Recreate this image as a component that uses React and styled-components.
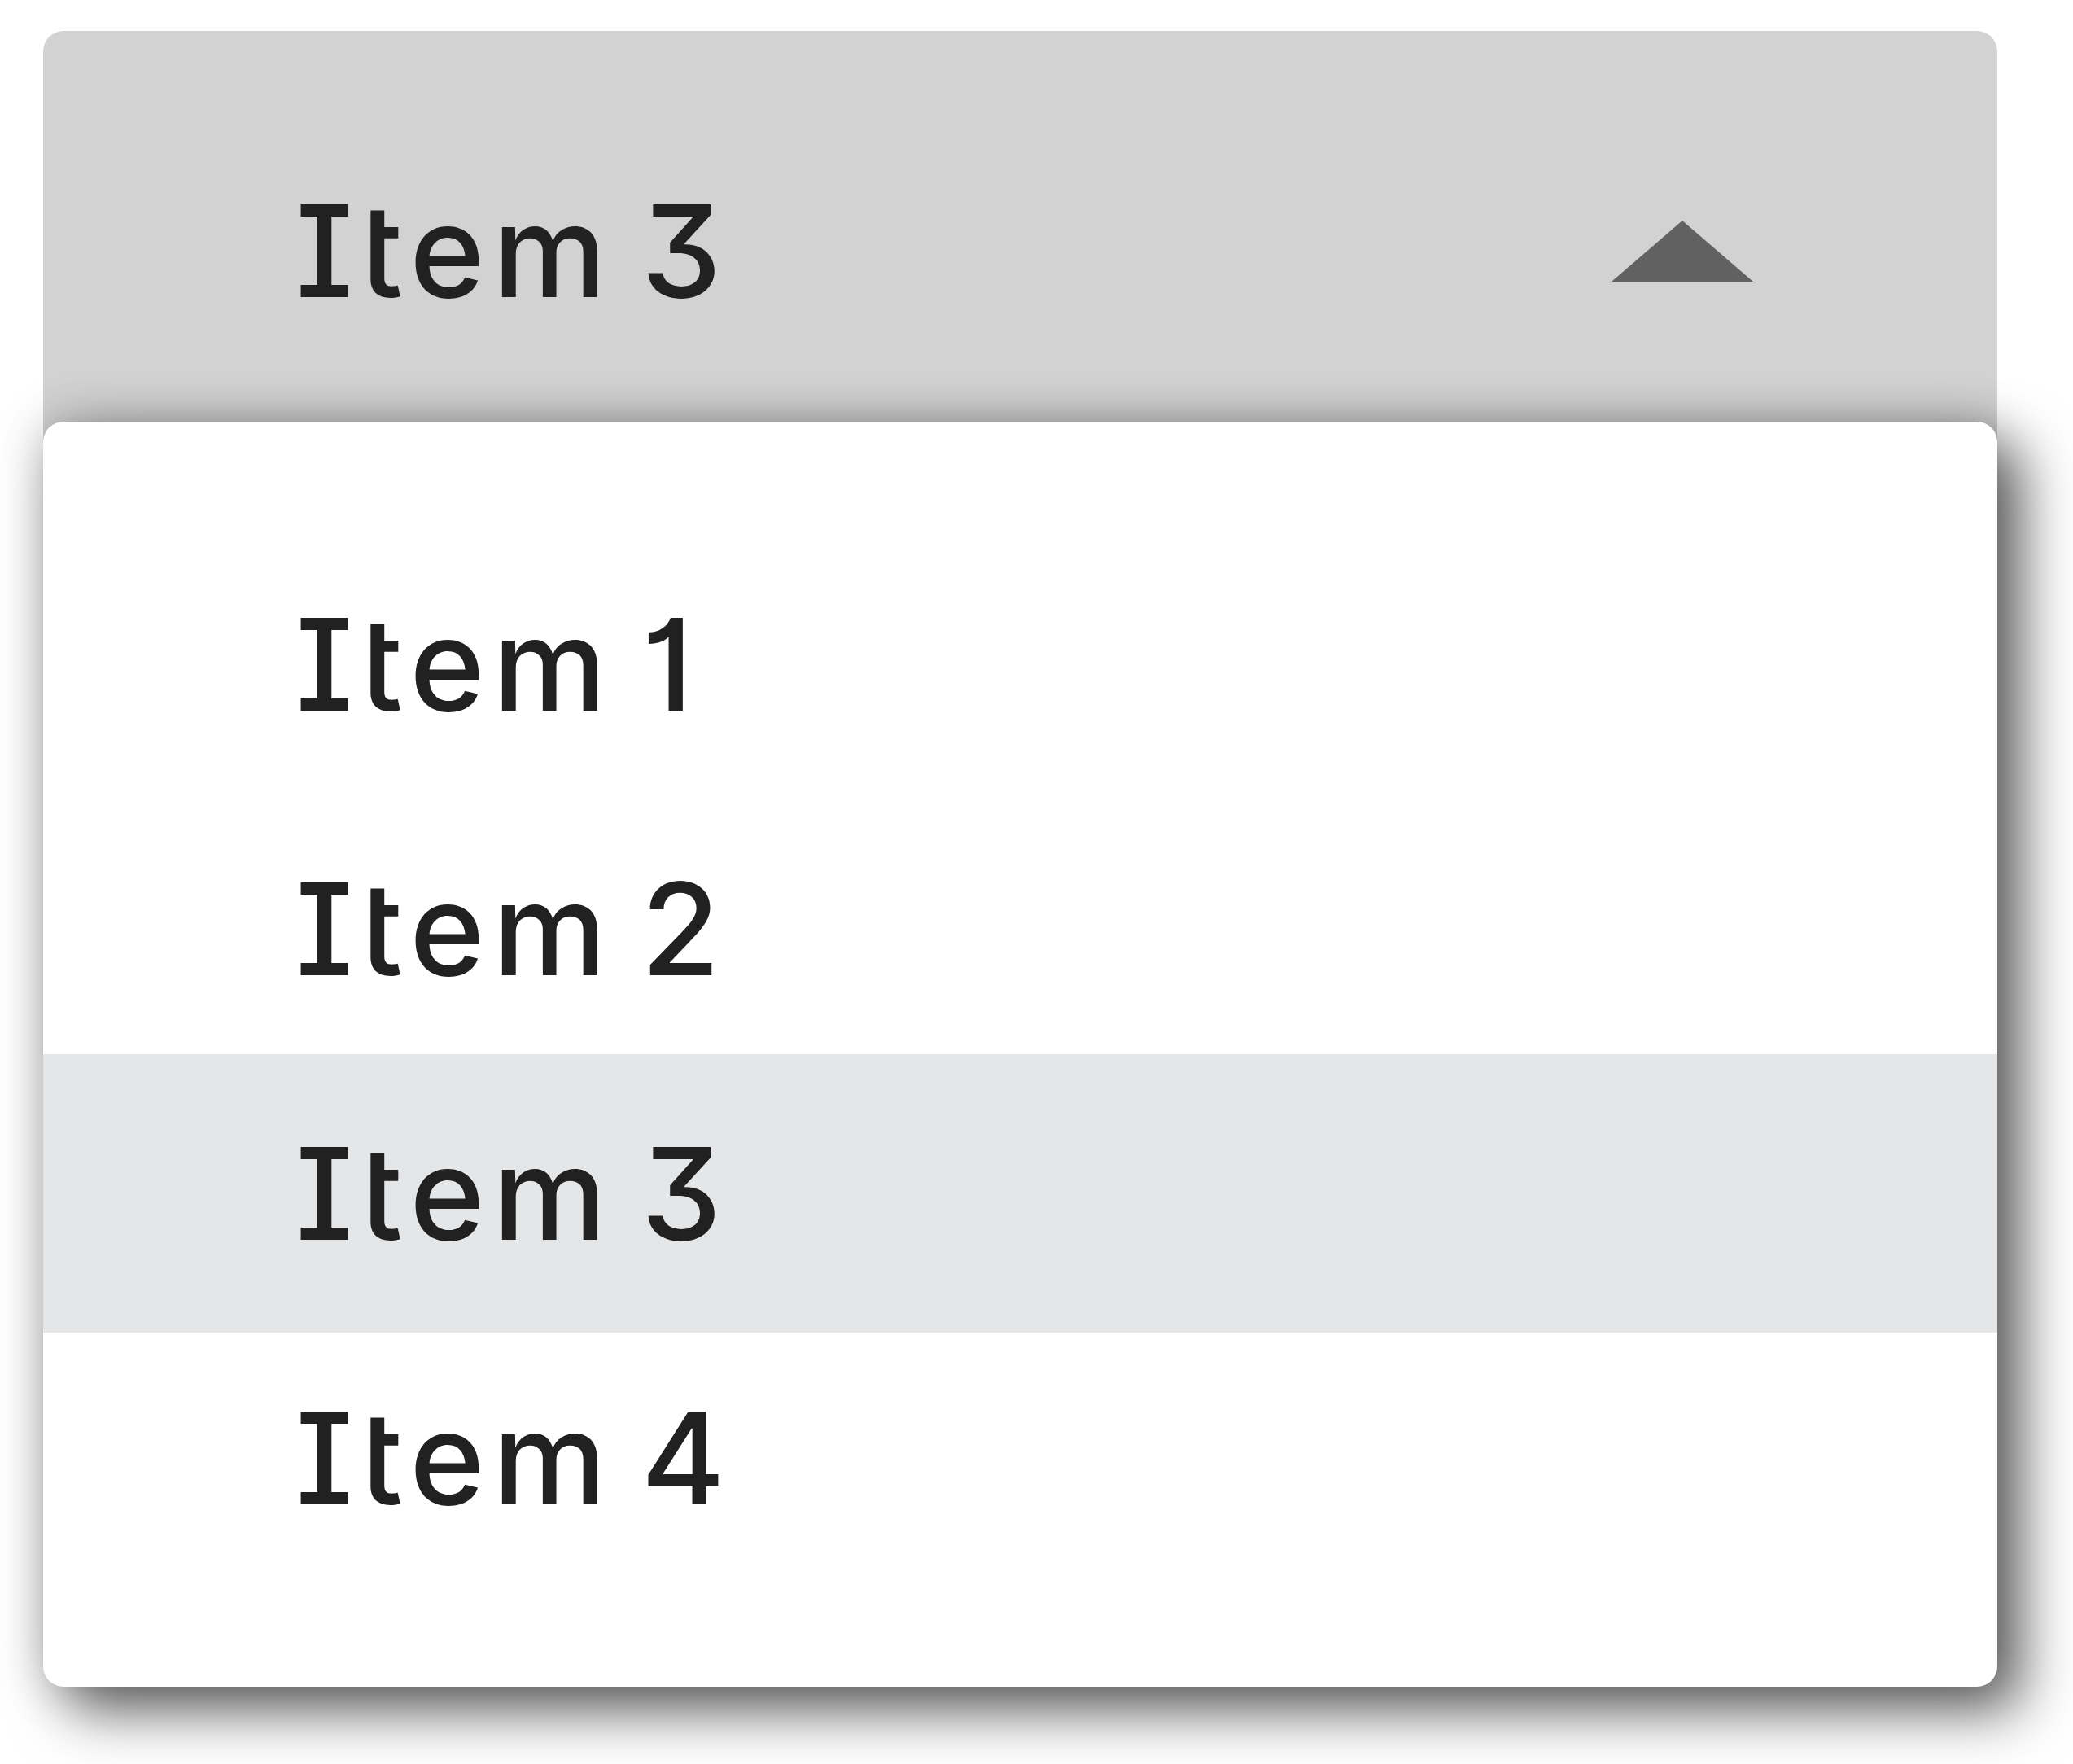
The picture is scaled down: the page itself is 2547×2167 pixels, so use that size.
import React from "react";
import styled, { createGlobalStyle } from "styled-components";

const GlobalStyle = createGlobalStyle`
  html, body {
    margin: 0;
    padding: 0;
    background: #ffffff;
  }
  body {
    font-family: "Inter", "Liberation Sans", sans-serif;
  }
`;

const Page = styled.div`
  padding: 38px 0 0 53px;
  min-height: 2167px;
  box-sizing: border-box;
`;

const SelectRoot = styled.div`
  position: relative;
  width: 2401px;
`;

const Label = styled.span`
  font-family: "Inter", "Liberation Sans", sans-serif;
  font-feature-settings: "ss02" 1, "cv08" 1, "cv09" 1, "cv13" 1, "cv01" 1;
  font-size: 157px;
  font-weight: 500;
  letter-spacing: 10px;
  word-spacing: -19px;
  line-height: 1;
  color: #212121;
  white-space: nowrap;
`;

const Trigger = styled.div`
  height: 540px;
  box-sizing: border-box;
  background: #d2d2d2;
  border-radius: 25px 25px 0 0;
  display: flex;
  align-items: center;
  justify-content: space-between;
  padding: 0 300px 0 310px;
`;

const Caret = styled.svg`
  width: 174px;
  height: 75px;
  display: block;
  flex: none;
`;

const Menu = styled.ul`
  position: absolute;
  top: 480px;
  left: 0;
  right: 0;
  margin: 0;
  padding: 136px 0 118px;
  list-style: none;
  background: #ffffff;
  border-radius: 25px;
  box-shadow: 30px 30px 70px rgba(0, 0, 0, 0.6), 0 0 60px rgba(0, 0, 0, 0.22);
`;

const Option = styled.li`
  display: flex;
  align-items: center;
  box-sizing: border-box;
  padding-left: 310px;
  height: ${(p) => (p.$selected ? "342px" : "325px")};
  margin: ${(p) => (p.$selected ? "-9px 0 -8px" : "0")};
  background: ${(p) => (p.$selected ? "#e5e6e8" : "transparent")};
`;

const items = ["Item 1", "Item 2", "Item 3", "Item 4"];

export default function App() {
  const selected = "Item 3";
  return (
    <>
      <GlobalStyle />
      <Page>
        <SelectRoot>
          <Trigger>
            <Label>{selected}</Label>
            <Caret viewBox="0 0 174 75" aria-hidden="true">
              <polygon points="0,75 87,0 174,75" fill="#616161" />
            </Caret>
          </Trigger>
          <Menu>
            {items.map((it) => (
              <Option key={it} $selected={it === selected}>
                <Label>{it}</Label>
              </Option>
            ))}
          </Menu>
        </SelectRoot>
      </Page>
    </>
  );
}
